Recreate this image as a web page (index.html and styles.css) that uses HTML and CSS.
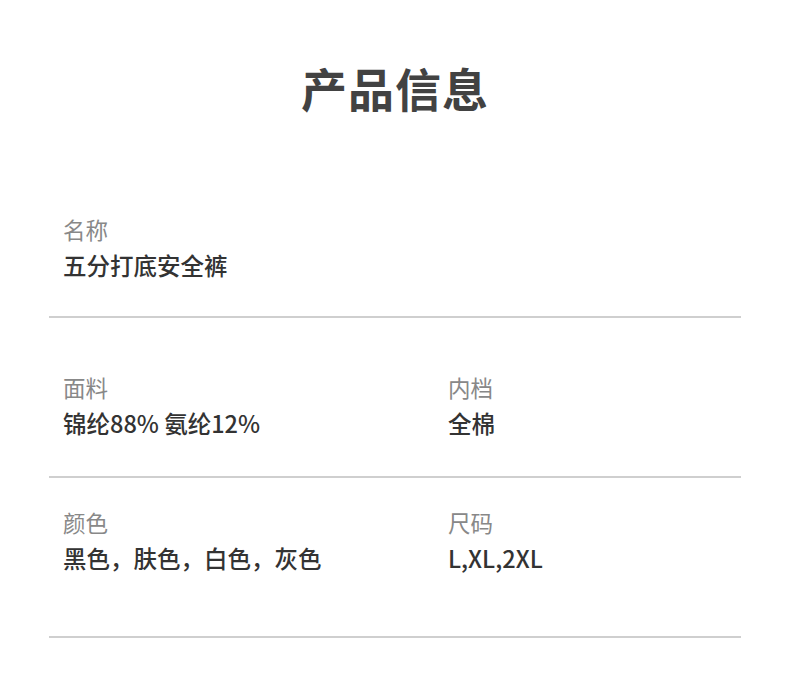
FILE: index.html
```html
<!DOCTYPE html>
<html lang="zh-CN">
<head>
<meta charset="utf-8">
<link rel="stylesheet" href="styles.css">
</head>
<body>
<div class="page">
  <h1 class="title">产品信息</h1>
  <div class="row row-1">
    <div class="item">
      <div class="label">名称</div>
      <div class="value">五分打底安全裤</div>
    </div>
  </div>
  <div class="row row-2 two">
    <div class="item">
      <div class="label">面料</div>
      <div class="value">锦纶88% 氨纶12%</div>
    </div>
    <div class="item">
      <div class="label">内档</div>
      <div class="value">全棉</div>
    </div>
  </div>
  <div class="row row-3 two">
    <div class="item">
      <div class="label">颜色</div>
      <div class="value">黑色，肤色，白色，灰色</div>
    </div>
    <div class="item">
      <div class="label">尺码</div>
      <div class="value">L,XL,2XL</div>
    </div>
  </div>
</div>
</body>
</html>
```
FILE: styles.css
```css
html, body {
  margin: 0;
  padding: 0;
  background: #ffffff;
}
.page {
  width: 790px;
  height: 676px;
  padding: 57px 49px 0;
  box-sizing: border-box;
  font-family: "Noto Sans CJK SC", "Noto Sans", sans-serif;
}
.title {
  margin: 0 0 97px;
  text-align: center;
  font-size: 46px;
  line-height: 60px;
  font-weight: 700;
  color: #424242;
  letter-spacing: 1px;
}
.row {
  border-bottom: 2px solid #cfcfcf;
}
.row.two {
  display: grid;
  grid-template-columns: 385px 1fr;
}
.row-1 { padding: 0 0 36px; }
.row-2 { padding: 54px 0 38px; }
.row-3 { padding: 29px 0 63px; }
.item {
  padding-left: 14px;
}
.label {
  font-size: 22.5px;
  line-height: 30px;
  color: #888888;
  font-weight: 400;
}
.value {
  margin-top: 6px;
  font-size: 23.5px;
  line-height: 30px;
  color: #333333;
  font-weight: 500;
}
```
